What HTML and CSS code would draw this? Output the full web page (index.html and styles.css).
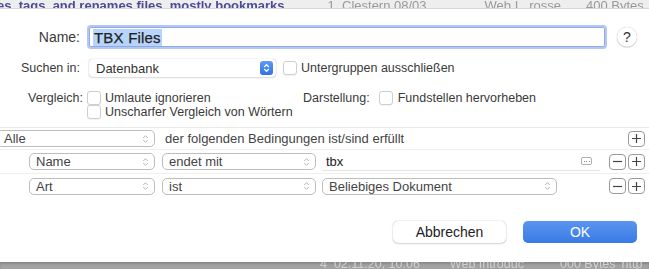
FILE: index.html
```html
<!DOCTYPE html>
<html lang="de">

<head>
    <meta charset="UTF-8">
    <title>Intelligente Gruppe</title>
    <link rel="stylesheet" href="styles.css">
</head>

<body>
    <div class="backdrop-top">
        <span class="bt-title">es, tags, and renames files, mostly bookmarks</span>
        <span class="bt-col bt-c1">1&nbsp; Clestern 08/03</span>
        <span class="bt-col bt-c2">Web I...rosse</span>
        <span class="bt-col bt-c3">400 Bytes</span>
        <span class="bt-col bt-c4">htt</span>
    </div>

    <div class="sheet">
        <div class="row row-name">
            <span class="lbl lbl-name lbl-big">Name:</span>
            <div class="name-field"><span class="sel">TBX Files</span></div>
            <div class="help">?</div>
        </div>

        <div class="row row-search">
            <span class="lbl lbl-name">Suchen in:</span>
            <div class="popup-plain">
                <span>Datenbank</span>
                <span class="stepper">
                    <svg width="7" height="10" viewBox="0 0 7 10"><path d="M1.2 4 L3.5 1.7 L5.8 4 M1.2 6 L3.5 8.3 L5.8 6" fill="none" stroke="#fff" stroke-width="1.3"/></svg>
                </span>
            </div>
            <span class="check"></span>
            <span class="opt">Untergruppen ausschließen</span>
        </div>

        <div class="row row-compare">
            <span class="lbl lbl-cmp">Vergleich:</span>
            <div class="opt-col">
                <div class="opt-line"><span class="check"></span><span class="opt">Umlaute ignorieren</span></div>
                <div class="opt-line"><span class="check"></span><span class="opt">Unscharfer Vergleich von Wörtern</span></div>
            </div>
            <div class="opt-line">
                <span class="lbl">Darstellung:</span>
                <span class="check check-show"></span><span class="opt">Fundstellen hervorheben</span>
            </div>
        </div>

        <div class="criteria">
            <div class="crit-row crit-all">
                <div class="popup popup-all"><span>Alle</span><svg class="chev" width="7" height="10" viewBox="0 0 7 10"><path d="M1.2 4 L3.5 1.7 L5.8 4 M1.2 6 L3.5 8.3 L5.8 6" fill="none" stroke="#b4b4b4" stroke-width="1"/></svg></div>
                <span class="crit-text">der folgenden Bedingungen ist/sind erfüllt</span>
                <div class="pm pm-first"><svg width="9" height="9" viewBox="0 0 9 9"><path d="M0 4.5 H9 M4.5 0 V9" stroke="#444" stroke-width="1.2"/></svg></div>
            </div>

            <div class="crit-row">
                <div class="popup popup-key"><span>Name</span><svg class="chev" width="7" height="10" viewBox="0 0 7 10"><path d="M1.2 4 L3.5 1.7 L5.8 4 M1.2 6 L3.5 8.3 L5.8 6" fill="none" stroke="#b4b4b4" stroke-width="1"/></svg></div>
                <div class="popup popup-op"><span>endet mit</span><svg class="chev" width="7" height="10" viewBox="0 0 7 10"><path d="M1.2 4 L3.5 1.7 L5.8 4 M1.2 6 L3.5 8.3 L5.8 6" fill="none" stroke="#b4b4b4" stroke-width="1"/></svg></div>
                <div class="value-field">
                    <span>tbx</span>
                    <span class="more"><i></i><i></i><i></i></span>
                </div>
                <div class="pm pm-minus"><svg width="9" height="9" viewBox="0 0 9 9"><path d="M0 4.5 H9" stroke="#444" stroke-width="1.2"/></svg></div>
                <div class="pm"><svg width="9" height="9" viewBox="0 0 9 9"><path d="M0 4.5 H9 M4.5 0 V9" stroke="#444" stroke-width="1.2"/></svg></div>
            </div>

            <div class="crit-row">
                <div class="popup popup-key"><span>Art</span><svg class="chev" width="7" height="10" viewBox="0 0 7 10"><path d="M1.2 4 L3.5 1.7 L5.8 4 M1.2 6 L3.5 8.3 L5.8 6" fill="none" stroke="#b4b4b4" stroke-width="1"/></svg></div>
                <div class="popup popup-op"><span>ist</span><svg class="chev" width="7" height="10" viewBox="0 0 7 10"><path d="M1.2 4 L3.5 1.7 L5.8 4 M1.2 6 L3.5 8.3 L5.8 6" fill="none" stroke="#b4b4b4" stroke-width="1"/></svg></div>
                <div class="popup popup-val"><span>Beliebiges Dokument</span><svg class="chev" width="7" height="10" viewBox="0 0 7 10"><path d="M1.2 4 L3.5 1.7 L5.8 4 M1.2 6 L3.5 8.3 L5.8 6" fill="none" stroke="#b4b4b4" stroke-width="1"/></svg></div>
                <div class="pm pm-minus pm-far"><svg width="9" height="9" viewBox="0 0 9 9"><path d="M0 4.5 H9" stroke="#444" stroke-width="1.2"/></svg></div>
                <div class="pm"><svg width="9" height="9" viewBox="0 0 9 9"><path d="M0 4.5 H9 M4.5 0 V9" stroke="#444" stroke-width="1.2"/></svg></div>
            </div>
        </div>

        <div class="buttons">
            <div class="btn btn-cancel">Abbrechen</div>
            <div class="btn btn-ok">OK</div>
        </div>
    </div>

    <div class="backdrop-bottom">
        <span class="bb-col bb-c1">4&nbsp; 02.11.20, 10:06</span>
        <span class="bb-col bb-c2">Web Introduc</span>
        <span class="bb-col bb-c3">000 Bytes</span>
        <span class="bb-col bb-c4">http</span>
    </div>
</body>

</html>
```

FILE: styles.css
```css
body {
    margin: 0;
    width: 649px;
    height: 269px;
    overflow: hidden;
    font-family: "Liberation Sans", Arial, sans-serif;
    font-size: 12.5px;
    color: #333;
    background: #fff;
}

/* window behind the sheet */
.backdrop-top {
    height: 9px;
    background: #eeeeee;
    overflow: hidden;
    white-space: nowrap;
    display: flex;
    align-items: flex-start;
    line-height: 12px;
    font-size: 13px;
    border-bottom: 1px solid #d8d8d8;
    box-sizing: border-box;
}

.backdrop-top span {
    margin-top: 0;
    filter: blur(0.6px);
}

.bt-title {
    font-weight: bold;
    color: #4a4c98;
    margin-left: -3px;
}

.bt-col {
    color: #9a9a9a;
}

.bt-c1 { margin-left: 43px; }
.bt-c2 { margin-left: 58px; }
.bt-c3 { margin-left: 25px; }
.bt-c4 { margin-left: 18px; font-weight: bold; color: #555; }

.backdrop-bottom {
    height: 7px;
    background: #a2a2a2;
    overflow: hidden;
    white-space: nowrap;
    display: flex;
    line-height: 12px;
    font-size: 12.5px;
    box-shadow: inset 0 2px 2px rgba(0, 0, 0, 0.15);
}

.backdrop-bottom span {
    margin-top: -4px;
    color: #cfcfcf;
    filter: blur(0.5px);
}

.bb-c1 { margin-left: 320px; }
.bb-c2 { margin-left: 30px; }
.bb-c3 { margin-left: 36px; }
.bb-c4 { margin-left: 6px; }

/* the sheet */
.sheet {
    height: 253px;
    box-sizing: border-box;
    padding-top: 16px;
    background: #fff;
}

.row {
    display: flex;
    align-items: center;
}

.lbl {
    color: #3a3a3a;
    white-space: nowrap;
}

.lbl-name {
    width: 80px;
    text-align: right;
    flex-shrink: 0;
}

.lbl-big {
    font-size: 14px;
}

.lbl-cmp {
    width: 83px;
    text-align: right;
    flex-shrink: 0;
    align-self: flex-start;
    line-height: 14px;
}

.row-name {
    height: 24px;
}

.name-field {
    margin-left: 9px;
    width: 516px;
    height: 20px;
    border: 1px solid #8fa9e6;
    box-shadow: 0 0 0 2px #b4c7f1;
    border-radius: 2px;
    display: flex;
    align-items: center;
    padding-left: 3px;
    box-sizing: border-box;
    font-size: 15px;
    letter-spacing: 0.2px;
    -webkit-text-stroke: 0.25px #222;
    color: #222;
}

.sel {
    background: #b7d4fb;
    padding: 0 1px;
    line-height: 17px;
}

.help {
    margin-left: 12px;
    width: 20px;
    height: 20px;
    border-radius: 50%;
    background: #fff;
    box-shadow: 0 0 1px rgba(0, 0, 0, 0.35), 0 1px 1px rgba(0, 0, 0, 0.15);
    display: flex;
    align-items: center;
    justify-content: center;
    font-size: 14px;
    color: #333;
}

.row-search {
    margin-top: 10px;
    height: 18px;
}

.popup-plain {
    margin-left: 9px;
    width: 187px;
    height: 18px;
    box-sizing: border-box;
    border-radius: 4px;
    background: #fff;
    box-shadow: 0 0 1px rgba(0, 0, 0, 0.4), 0 1px 2px rgba(0, 0, 0, 0.12);
    display: flex;
    align-items: center;
    justify-content: space-between;
    padding: 0 3px 0 7px;
    color: #333;
    font-size: 13px;
}

.stepper {
    width: 13px;
    height: 14px;
    border-radius: 3px;
    background: linear-gradient(#5d9bf6, #2f72e6);
    display: flex;
    align-items: center;
    justify-content: center;
}

.check {
    width: 12px;
    height: 12px;
    border: 1px solid #cfcfcf;
    border-radius: 3px;
    background: #fff;
    box-shadow: 0 1px 1px rgba(0, 0, 0, 0.05);
    flex-shrink: 0;
}

.row-search .check {
    margin-left: 7px;
}

.opt {
    margin-left: 4px;
    color: #3a3a3a;
    white-space: nowrap;
}

.row-compare {
    margin-top: 14px;
    align-items: flex-start;
}

.opt-col {
    margin-left: 4px;
    width: 216px;
}

.opt-line {
    display: flex;
    align-items: center;
    height: 14px;
}

.check-show {
    margin-left: 9px;
}

.check-show + .opt {
    margin-left: 5px;
}

/* criteria editor */
.criteria {
    margin-top: 8px;
    border-top: 1px solid #e9e9e9;
    font-size: 13px;
}

.crit-row {
    display: flex;
    align-items: center;
    height: 24px;
    border-bottom: 1px solid #efefef;
    box-sizing: border-box;
}

.crit-row:last-child {
    border-bottom: none;
}

.crit-all {
    height: 22px;
}

.popup {
    height: 17px;
    box-sizing: border-box;
    border: 1px solid #bdbdbd;
    border-radius: 5px;
    background: #fff;
    display: flex;
    align-items: center;
    justify-content: space-between;
    padding: 0 5px 0 6px;
    color: #444;
    flex-shrink: 0;
}

.popup-all {
    width: 158px;
    margin-left: -3px;
}

.popup-key {
    width: 126px;
    margin-left: 29px;
}

.popup-op {
    width: 154px;
    margin-left: 7px;
}

.popup-val {
    width: 235px;
    margin-left: 6px;
}

.crit-text {
    margin-left: 10px;
    color: #444;
    white-space: nowrap;
}

.value-field {
    margin-left: 6px;
    width: 278px;
    height: 18px;
    box-sizing: border-box;
    border-bottom: 1px solid #e4e4e4;
    display: flex;
    align-items: center;
    justify-content: space-between;
    padding: 0 8px 0 4px;
    color: #222;
}

.more {
    width: 9px;
    height: 6px;
    border: 1px solid #b0b0b0;
    border-radius: 2px;
    display: flex;
    align-items: center;
    justify-content: space-evenly;
}

.more i {
    width: 1px;
    height: 1px;
    background: #888;
}

.pm {
    width: 17px;
    height: 16px;
    box-sizing: border-box;
    border: 1px solid #9a9a9a;
    border-radius: 4px;
    background: #fff;
    display: flex;
    align-items: center;
    justify-content: center;
    margin-left: 2px;
    flex-shrink: 0;
}

.pm-first {
    margin-left: auto;
    margin-right: 4px;
}

.pm-minus {
    margin-left: 9px;
}

.pm-far {
    margin-left: 52px;
}

/* buttons */
.buttons {
    display: flex;
    margin-top: 23px;
    padding-left: 393px;
}

.btn {
    height: 22px;
    box-sizing: border-box;
    border-radius: 5px;
    display: flex;
    align-items: center;
    justify-content: center;
    font-size: 14px;
}

.btn-cancel {
    width: 113px;
    background: #fff;
    color: #222;
    box-shadow: 0 0 1px rgba(0, 0, 0, 0.4), 0 1px 2px rgba(0, 0, 0, 0.15);
}

.btn-ok {
    width: 114px;
    margin-left: 17px;
    background: linear-gradient(#5a95ee, #3a7ae6);
    color: #fff;
}
```
